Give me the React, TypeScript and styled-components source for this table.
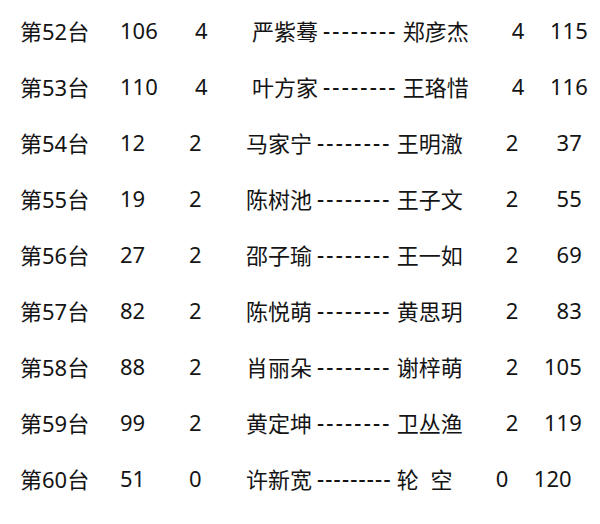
import { createGlobalStyle, styled } from "styled-components";

const GlobalStyle = createGlobalStyle`
  html, body {
    margin: 0;
    padding: 0;
    background: #ffffff;
  }
  body {
    font-family: "Noto Sans", "Noto Sans CJK SC", sans-serif;
    color: #141414;
  }
`;

const Sheet = styled.section`
  display: flex;
  flex-direction: column;
  padding: 2px 0 0 20px;
  width: 600px;
  height: 524px;
  box-sizing: border-box;
`;

const Row = styled.div`
  display: flex;
  align-items: center;
  height: 56px;
  font-size: 22px;
  line-height: 1;
  white-space: pre;
`;

const Table = styled.span`
  width: 100px;
`;

const Score = styled.span<{ $shift?: number }>`
  width: ${(p) => 69 + (p.$shift ?? 0)}px;
`;

const Points = styled.span`
  width: 57px;
`;

const Pair = styled.span`
  display: flex;
  align-items: center;
  gap: 5px;
`;

const Name = styled.span`
  font-family: "Noto Sans CJK SC", sans-serif;
  word-spacing: 7px;
`;

const Dashes = styled.span<{ $spacing: number }>`
  display: inline-block;
  font-weight: 500;
  letter-spacing: ${(p) => p.$spacing}px;
`;

const Tail = styled.span`
  display: flex;
  width: 76px;
  margin-left: 43px;
`;

const Total = styled.span`
  flex: 1;
  text-align: right;
`;

type Match = {
  table: number;
  score: number;
  pts: number;
  home: string;
  away: string;
  awayPts: number;
  total: number;
  shift?: number;
  dashes?: number;
};

const matches: Match[] = [
  { table: 52, score: 106, pts: 4, home: "严紫蓦", away: "郑彦杰", awayPts: 4, total: 115, shift: 6 },
  { table: 53, score: 110, pts: 4, home: "叶方家", away: "王珞惜", awayPts: 4, total: 116, shift: 6 },
  { table: 54, score: 12, pts: 2, home: "马家宁", away: "王明澈", awayPts: 2, total: 37 },
  { table: 55, score: 19, pts: 2, home: "陈树池", away: "王子文", awayPts: 2, total: 55 },
  { table: 56, score: 27, pts: 2, home: "邵子瑜", away: "王一如", awayPts: 2, total: 69 },
  { table: 57, score: 82, pts: 2, home: "陈悦萌", away: "黄思玥", awayPts: 2, total: 83 },
  { table: 58, score: 88, pts: 2, home: "肖丽朵", away: "谢梓萌", awayPts: 2, total: 105 },
  { table: 59, score: 99, pts: 2, home: "黄定坤", away: "卫丛渔", awayPts: 2, total: 119 },
  { table: 60, score: 51, pts: 0, home: "许新宽", away: "轮 空", awayPts: 0, total: 120, dashes: 9 },
];

export default function App() {
  return (
    <>
      <GlobalStyle />
      <Sheet>
        {matches.map((m) => {
          const count = m.dashes ?? 8;
          // spread the hyphens over the same ~75px run whatever their count
          const spacing = (75 - count * 7.1) / count;
          return (
            <Row key={m.table}>
              <Table>
                <Name>第</Name>
                {m.table}
                <Name>台</Name>
              </Table>
              <Score $shift={m.shift}>{m.score}</Score>
              <Points>{m.pts}</Points>
              <Pair>
                <Name>{m.home}</Name>
                <Dashes $spacing={spacing}>{"-".repeat(count)}</Dashes>
                <Name>{m.away}</Name>
              </Pair>
              <Tail>
                <span>{m.awayPts}</span>
                <Total>{m.total}</Total>
              </Tail>
            </Row>
          );
        })}
      </Sheet>
    </>
  );
}
